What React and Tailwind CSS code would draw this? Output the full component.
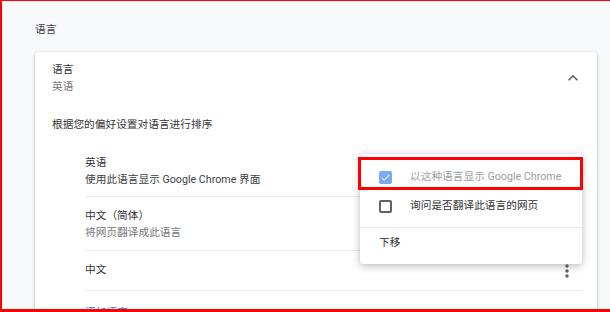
// Chrome settings: language section with open row menu
const font = { fontFamily: 'Roboto, "Noto Sans CJK SC", sans-serif' };

function ChevronUp() {
  return (
    <svg width="20" height="20" viewBox="0 0 24 24" className="fill-[#5f6368]">
      <path d="M12 8l-6 6 1.41 1.41L12 10.83l4.59 4.58L18 14z" />
    </svg>
  );
}

function MoreVert() {
  return (
    <svg width="20" height="20" viewBox="0 0 24 24" className="fill-[#5f6368]">
      <path d="M12 8c1.1 0 2-.9 2-2s-.9-2-2-2-2 .9-2 2 .9 2 2 2zm0 2c-1.1 0-2 .9-2 2s.9 2 2 2 2-.9 2-2-.9-2-2-2zm0 6c-1.1 0-2 .9-2 2s.9 2 2 2 2-.9 2-2-.9-2-2-2z" />
    </svg>
  );
}

function Checkbox({ checked }) {
  if (checked) {
    return (
      <div className="w-[13px] h-[13px] rounded-[2px] bg-[#7aa9f5] flex items-center justify-center shrink-0">
        <svg width="11" height="11" viewBox="0 0 24 24" className="fill-white">
          <path d="M9 16.17L4.83 12l-1.42 1.41L9 19 21 7l-1.41-1.41z" />
        </svg>
      </div>
    );
  }
  return <div className="w-[13px] h-[13px] rounded-[2px] border-2 border-[#5f6368] shrink-0" />;
}

const languages = [
  { name: '英语', note: '使用此语言显示 Google Chrome 界面', h: 'h-[51px]', noteCls: 'text-[#3c4043]' },
  { name: '中文（简体）', note: '将网页翻译成此语言', h: 'h-[54px]', noteCls: 'text-[#757575]' },
];

export default function App() {
  return (
    <div
      style={font}
      className="relative w-[610px] h-[312px] overflow-hidden bg-[#f8f9fa] border-t border-l-2 border-b-[3px] border-[#ff0000] text-[10.7px] text-[#333]"
    >
      <div className="pl-[33px] pr-[13px]">
        <div className="pt-[19px] leading-[20px] text-[#3c4043]">语言</div>

        <div className="mt-[12px] bg-white rounded-[4px] shadow-[0_1px_2px_rgba(60,64,67,0.3),0_1px_3px_1px_rgba(60,64,67,0.15)] pb-4">
          <div className="h-[52px] pl-[17px] pr-[14px] flex items-center justify-between">
            <div className="leading-[17px]">
              <div className="text-[#333]">语言</div>
              <div className="text-[#757575]">英语</div>
            </div>
            <ChevronUp />
          </div>

          <div className="h-[42px] pl-[17px] flex items-center">根据您的偏好设置对语言进行排序</div>

          <div className="ml-[50px] mr-[15px]">
            {languages.map((l) => (
              <div key={l.name} className={`${l.h} flex flex-col justify-center leading-[17px] border-b border-[#e8eaed]`}>
                <div>{l.name}</div>
                <div className={l.noteCls}>{l.note}</div>
              </div>
            ))}
            <div className="h-[40px] flex items-center justify-between pr-[5px] border-b border-[#e8eaed]">
              <div>中文</div>
              <MoreVert />
            </div>
            <div className="h-[44px] flex items-center text-[#1a73e8]">添加语言</div>
          </div>
        </div>
      </div>

      {/* row action menu */}
      <div className="absolute left-[358px] top-[153px] w-[222px] h-[110px] bg-white rounded-[4px] shadow-[0_2px_8px_rgba(0,0,0,0.28)] pt-[9px]">
        <div className="h-[29px] flex items-center pl-[19px] gap-[18px] text-[#9aa0a6]">
          <Checkbox checked />
          <span>以这种语言显示 Google Chrome</span>
        </div>
        <div className="h-[29px] flex items-center pl-[19px] gap-[18px] text-[#333]">
          <Checkbox />
          <span>询问是否翻译此语言的网页</span>
        </div>
        <div className="mt-[6px] border-t border-[#e8eaed] h-[31px] flex items-center pl-[19px]">下移</div>
      </div>

      {/* highlight */}
      <div className="absolute left-[356px] top-[156px] w-[225px] h-[33px] border-[3px] border-[#ff0000]" />
    </div>
  );
}
